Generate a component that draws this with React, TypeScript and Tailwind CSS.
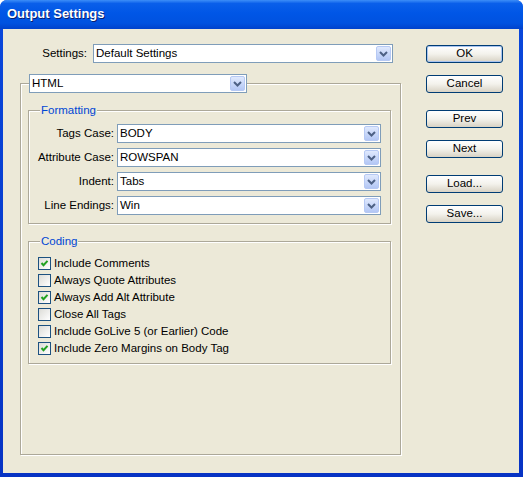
import React from "react";

function Chevron() {
  return (
    <svg width="9" height="6" viewBox="0 0 9 6">
      <path d="M1 1 L4.5 4.5 L8 1" fill="none" stroke="#4d6185" strokeWidth="2" />
    </svg>
  );
}

function Combo({ value, className }: { value: string; className: string }) {
  return (
    <div className={"flex h-[19px] border border-[#7f9db9] bg-white " + className}>
      <div className="flex-1 flex items-center pl-[2px] text-black whitespace-nowrap overflow-hidden">{value}</div>
      <div className="w-[15px] my-[1px] mr-[1px] rounded-[2px] border border-[#b6c9f4] bg-gradient-to-b from-[#e0e9fd] to-[#b3c7f5] flex items-center justify-center">
        <Chevron />
      </div>
    </div>
  );
}

function Btn({ label, def, className }: { label: string; def?: boolean; className?: string }) {
  return (
    <div
      className={
        "w-[77px] h-[18px] rounded-[3px] border border-[#003c74] bg-gradient-to-b from-white via-[#f3f2ec] to-[#d8d2c4] flex items-center justify-center text-black " +
        (def ? "shadow-[inset_0_0_0_1px_#a9c4ef] " : "") +
        (className ?? "")
      }
    >
      {label}
    </div>
  );
}

function Check({ label, checked }: { label: string; checked: boolean }) {
  return (
    <div className="flex items-center h-[17px]">
      <span className="w-[13px] h-[13px] border border-[#1c5180] bg-gradient-to-br from-[#dcdcd7] to-white flex items-center justify-center">
        {checked && (
          <svg width="9" height="9" viewBox="0 0 9 9">
            <path d="M1.5 4 L3.5 6.2 L7.5 1.8" fill="none" stroke="#21a121" strokeWidth="2" />
          </svg>
        )}
      </span>
      <span className="ml-[3px] whitespace-nowrap">{label}</span>
    </div>
  );
}

function Row({ label, value }: { label: string; value: string }) {
  return (
    <div className="flex items-center h-[19px]">
      <div className="w-[85px] text-right mr-[3px] whitespace-nowrap">{label}</div>
      <Combo value={value} className="w-[264px]" />
    </div>
  );
}

const etched = "border border-[#aca899] shadow-[inset_1px_1px_0_white,1px_1px_0_white]";

export default function App() {
  return (
    <div className="w-[523px] h-[477px] bg-white text-[11.5px] text-black font-['Liberation_Sans',Arial,sans-serif]">
      <div className="w-full h-full flex flex-col rounded-t-[7px] overflow-hidden bg-gradient-to-b from-[#0a48dc] to-[#0733c4]">
        <div className="h-[29px] shrink-0 flex items-center pl-[7px] pb-[1px] bg-[linear-gradient(to_bottom,#3d8ef8_0%,#0a5fea_12%,#0056e6_45%,#0052e0_80%,#0042cc_100%)]">
          <span className="text-white font-bold text-[13px] [text-shadow:1px_1px_0_#0a1e6e]">Output Settings</span>
        </div>
        <div className="flex-1 ml-[3px] mr-[4px] mb-[4px] bg-[#ece9d8] flex">
          <div className="pl-[17px] pt-[15px] w-[398px] shrink-0">
            <div className="flex items-center h-[19px]">
              <div className="w-[67px] text-right mr-[6px]">Settings:</div>
              <Combo value="Default Settings" className="w-[300px]" />
            </div>
            <div className={"relative mt-[20px] w-[381px] h-[372px] pt-[26px] pl-[7px] " + etched}>
              <Combo value="HTML" className="absolute left-[8px] top-[-10px] w-[218px]" />
              <div className={"relative w-[363px] h-[114px] pt-[13px] flex flex-col gap-[5px] " + etched}>
                <span className="absolute left-[11px] top-[-8px] px-[1px] bg-[#ece9d8] text-[#0046d5] leading-[14px]">Formatting</span>
                <Row label="Tags Case:" value="BODY" />
                <Row label="Attribute Case:" value="ROWSPAN" />
                <Row label="Indent:" value="Tabs" />
                <Row label="Line Endings:" value="Win" />
              </div>
              <div className={"relative mt-[17px] w-[363px] h-[123px] pt-[13px] pl-[9px] " + etched}>
                <span className="absolute left-[11px] top-[-8px] px-[1px] bg-[#ece9d8] text-[#0046d5] leading-[14px]">Coding</span>
                <Check label="Include Comments" checked />
                <Check label="Always Quote Attributes" checked={false} />
                <Check label="Always Add Alt Attribute" checked />
                <Check label="Close All Tags" checked={false} />
                <Check label="Include GoLive 5 (or Earlier) Code" checked={false} />
                <Check label="Include Zero Margins on Body Tag" checked />
              </div>
            </div>
          </div>
          <div className="ml-[25px] pt-[16px] w-[77px] flex flex-col">
            <Btn label="OK" def />
            <Btn label="Cancel" className="mt-[12px]" />
            <Btn label="Prev" className="mt-[17px]" />
            <Btn label="Next" className="mt-[12px]" />
            <Btn label="Load..." className="mt-[17px]" />
            <Btn label="Save..." className="mt-[12px]" />
          </div>
        </div>
      </div>
    </div>
  );
}
